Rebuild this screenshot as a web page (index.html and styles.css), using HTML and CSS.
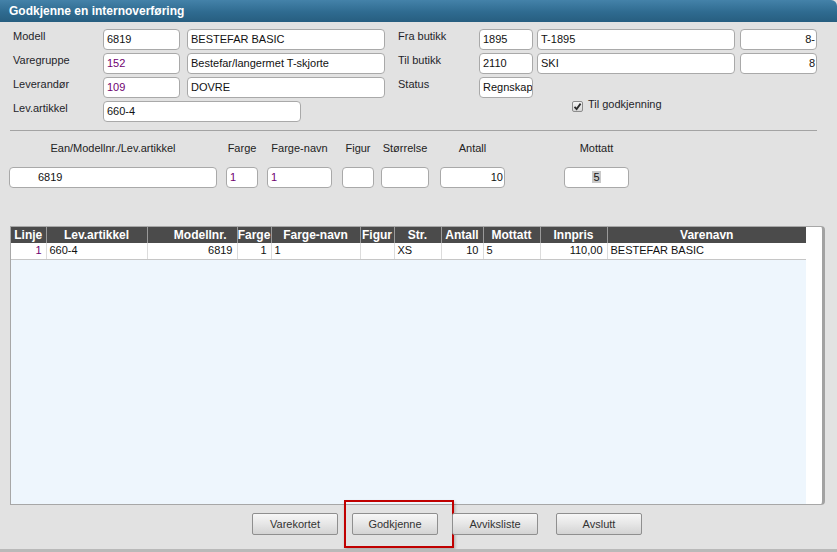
FILE: index.html
```html
<!DOCTYPE html>
<html lang="no">
<head>
<meta charset="utf-8">
<title>Godkjenne en internoverføring</title>
<link rel="stylesheet" href="styles.css">
</head>
<body>
<div class="dialog">
  <div class="titlebar">Godkjenne en internoverføring</div>

  <div class="form">
    <div class="row">
      <span class="lbl">Modell</span>
      <span class="inp w-code">6819</span>
      <span class="inp w-name">BESTEFAR BASIC</span>
      <span class="lbl lbl-r">Fra butikk</span>
      <span class="inp w-shop">1895</span>
      <span class="inp w-name2">T-1895</span>
      <span class="inp w-code right tight">8-</span>
    </div>
    <div class="row">
      <span class="lbl">Varegruppe</span>
      <span class="inp w-code purple">152</span>
      <span class="inp w-name">Bestefar/langermet T-skjorte</span>
      <span class="lbl lbl-r">Til butikk</span>
      <span class="inp w-shop">2110</span>
      <span class="inp w-name2">SKI</span>
      <span class="inp w-code right tight">8</span>
    </div>
    <div class="row">
      <span class="lbl">Leverandør</span>
      <span class="inp w-code purple">109</span>
      <span class="inp w-name">DOVRE</span>
      <span class="lbl lbl-r">Status</span>
      <span class="inp w-shop">Regnskap</span>
    </div>
    <div class="row">
      <span class="lbl">Lev.artikkel</span>
      <span class="inp w-art">660-4</span>
      <span class="check">
        <span class="box"><svg width="9" height="9" viewBox="0 0 9 9"><path d="M1.5 4.8 L3.6 7 L7.6 1.6" fill="none" stroke="#2a2a2a" stroke-width="1.8"/></svg></span>
        <span class="check-text">Til godkjenning</span>
      </span>
    </div>
  </div>

  <div class="sep"></div>

  <div class="fields">
    <div class="field f-ean"><span class="flbl">Ean/Modellnr./Lev.artikkel</span><span class="inp ean">6819</span></div>
    <div class="field f-farge"><span class="flbl">Farge</span><span class="inp purple">1</span></div>
    <div class="field f-fnavn"><span class="flbl">Farge-navn</span><span class="inp purple">1</span></div>
    <div class="field f-figur"><span class="flbl">Figur</span><span class="inp"></span></div>
    <div class="field f-str"><span class="flbl">Størrelse</span><span class="inp"></span></div>
    <div class="field f-antall"><span class="flbl">Antall</span><span class="inp right tight">10</span></div>
    <div class="field f-mottatt"><span class="flbl">Mottatt</span><span class="inp center"><span class="sel">5</span></span></div>
  </div>

  <div class="grid-wrap">
    <div class="grid-body">
      <table class="grid">
        <colgroup>
          <col style="width:35px"><col style="width:101px"><col style="width:90px"><col style="width:34px">
          <col style="width:89px"><col style="width:34px"><col style="width:47px"><col style="width:42px">
          <col style="width:57px"><col style="width:67px"><col style="width:199px">
        </colgroup>
        <thead>
          <tr>
            <th>Linje</th><th>Lev.artikkel</th><th class="th-r">Modellnr.</th><th>Farge</th><th>Farge-navn</th>
            <th>Figur</th><th>Str.</th><th>Antall</th><th>Mottatt</th><th>Innpris</th><th>Varenavn</th>
          </tr>
        </thead>
        <tbody>
          <tr>
            <td class="r purple">1</td><td>660-4</td><td class="r">6819</td><td class="r">1</td><td>1</td>
            <td></td><td>XS</td><td class="r">10</td><td>5</td><td class="r">110,00</td><td>BESTEFAR BASIC</td>
          </tr>
        </tbody>
      </table>
    </div>
  </div>

  <div class="buttons">
    <span class="btn">Varekortet</span>
    <span class="btn btn-marked">Godkjenne</span>
    <span class="btn">Avviksliste</span>
    <span class="btn btn-last">Avslutt</span>
  </div>
</div>
</body>
</html>
```

FILE: styles.css
```css
* { box-sizing: border-box; }

html, body {
  margin: 0;
  padding: 0;
}

body {
  background: #e2e2e2;
  font-family: "Liberation Sans", Arial, sans-serif;
  font-size: 11px;
  color: #222;
}

.dialog {
  width: 837px;
  height: 552px;
  background: #e2e2e2;
  border-bottom: 3px solid #b9b9b9;
  overflow: hidden;
}

.titlebar {
  height: 22px;
  line-height: 22px;
  padding-left: 9px;
  color: #fff;
  font-weight: bold;
  font-size: 12px;
  background: linear-gradient(#4482a9, #2f6b90 55%, #275e80);
  border-top-right-radius: 6px;
}

.form {
  padding: 7px 0 0 13px;
  display: flex;
  flex-direction: column;
  gap: 3px;
}

.row {
  display: flex;
  align-items: flex-start;
  height: 21px;
}

.lbl {
  width: 90px;
  line-height: 13px;
  padding-top: 1px;
  color: #1f1f2a;
}

.lbl-r {
  width: 81px;
  margin-left: 13px;
}

.inp {
  display: block;
  height: 21px;
  line-height: 19px;
  background: #fff;
  border: 1px solid #a9a9a9;
  border-radius: 4px;
  padding: 0 3px;
  color: #111;
  white-space: nowrap;
  overflow: hidden;
}

.purple { color: #700070; }
.right { text-align: right; }
.center { text-align: center; }
.tight { padding-right: 1px; }

.w-code { width: 77px; }
.w-name { width: 198px; margin-left: 7px; }
.w-shop { width: 54px; }
.w-name2 { width: 198px; margin-left: 4px; }
.row .w-code.right { margin-left: 5px; }
.w-art { width: 198px; }

.check {
  display: flex;
  align-items: flex-start;
  margin-left: 271px;
  margin-top: -3px;
}

.box {
  width: 11px;
  height: 11px;
  margin-top: 3px;
  border: 1px solid #8c8c8c;
  border-radius: 2px;
  background: linear-gradient(#f4f4f4, #d6d6d6);
  display: flex;
  align-items: center;
  justify-content: center;
}

.check-text {
  margin-left: 5px;
  line-height: 13px;
  color: #1f1f2a;
}

.sep {
  height: 1px;
  background: #a3a3a3;
  margin: 8px 20px 0 10px;
}

.fields {
  display: flex;
  align-items: flex-start;
  padding: 11px 0 0 9px;
}

.field {
  display: flex;
  flex-direction: column;
  align-items: center;
}

.flbl {
  line-height: 13px;
  height: 13px;
  margin-bottom: 12px;
  white-space: nowrap;
  color: #222;
}

.field .inp { width: 100%; }

.f-ean { width: 208px; }
.f-farge { width: 32px; margin-left: 9px; }
.f-fnavn { width: 65px; margin-left: 9px; }
.f-figur { width: 32px; margin-left: 10px; }
.f-str { width: 48px; margin-left: 7px; }
.f-antall { width: 65px; margin-left: 11px; }
.f-mottatt { width: 65px; margin-left: 59px; }

.inp.ean { padding-left: 28px; }

.sel {
  background: #c9c9c9;
  padding: 0 1px;
}

.grid-wrap {
  margin: 38px 0 0 10px;
  width: 815px;
  height: 279px;
  background: #fff;
  border: 1px solid #a7a7a7;
  border-right: 3px solid #a2a2a2;
  border-radius: 0 4px 4px 0;
  display: flex;
}

.grid-body {
  width: 795px;
  height: 100%;
  background: #eef6fd;
}

.grid {
  width: 795px;
  table-layout: fixed;
  border-collapse: collapse;
  font-size: 11px;
}

.grid th {
  background: #4b4b4b;
  color: #fff;
  font-size: 12px;
  font-weight: bold;
  height: 16px;
  line-height: 15px;
  padding: 0;
  text-align: center;
  border-right: 1px solid #9a9a9a;
  white-space: nowrap;
  overflow: hidden;
}

.grid th:last-child { border-right: none; }
.grid .th-r { text-align: right; padding-right: 10px; }

.grid td {
  background: #fff;
  height: 16px;
  line-height: 15px;
  padding: 0 3px;
  border-right: 1px solid #dcdcdc;
  border-bottom: 1px solid #c6c6c6;
  white-space: nowrap;
  overflow: hidden;
  color: #111;
}

.grid td:last-child { border-right: none; }
.grid td.r { text-align: right; padding-right: 4px; }
.grid td.purple { color: #700070; }

.buttons {
  display: flex;
  gap: 14px;
  padding: 8px 0 0 252px;
}

.btn {
  display: block;
  width: 86px;
  height: 22px;
  line-height: 20px;
  text-align: center;
  border: 1px solid #8f8f8f;
  border-radius: 2px;
  background: linear-gradient(#f7f7f7, #e6e6e6 50%, #d3d3d3);
  color: #333;
  position: relative;
}

.btn-last { margin-left: 4px; }

.btn-marked::after {
  content: "";
  position: absolute;
  left: -9px;
  top: -14px;
  width: 106px;
  height: 44px;
  border: 2px solid #c00000;
  box-shadow: 1px 2px 3px rgba(0, 0, 0, 0.25);
}
```
